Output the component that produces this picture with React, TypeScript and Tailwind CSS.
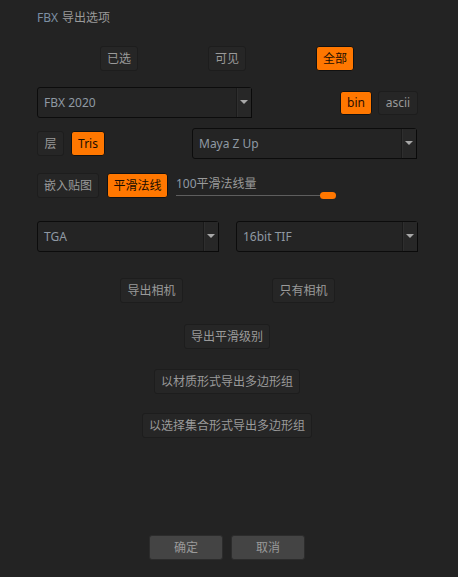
import React from 'react';

const font = { fontFamily: '"Noto Sans", "Noto Sans CJK SC", sans-serif' };

const Btn: React.FC<{ label: string; w: string; ml: string; active?: boolean }> = ({ label, w, ml, active }) => (
  <div
    className={
      'flex h-[25px] shrink-0 items-center justify-center rounded-[3px] border text-[12px] ' +
      w + ' ' + ml + ' ' +
      (active
        ? 'border-[#111111] bg-[#ff7700] text-[#1a0d00]'
        : 'border-[#1d1d1d] bg-[#262626] text-[#9a9a9a]')
    }
  >
    {label}
  </div>
);

const Select: React.FC<{ value: string; w: string; ml: string }> = ({ value, w, ml }) => (
  <div
    className={
      'flex h-[31px] shrink-0 items-stretch rounded-[3px] border border-[#0c0c0c] bg-[#242424] ' + w + ' ' + ml
    }
  >
    <div className="flex flex-1 items-center pl-[6px] text-[12px] text-[#8f99a3]">{value}</div>
    <div className="flex w-[15px] items-center justify-center border-l border-[#1a1a1a] bg-[#272727] shadow-[inset_1px_0_0_#2e2e2e,1px_1px_0_#0a0a0a]">
      <svg width="8" height="5" viewBox="0 0 8 5">
        <path d="M0 0 H8 L4 4 Z" fill="#a8a8a8" />
      </svg>
    </div>
  </div>
);

export default function App() {
  return (
    <div className="flex h-[577px] w-[458px] flex-col bg-[#232323]" style={font}>
      <div className="flex h-[36px] items-center pl-[37px] text-[12px] text-[#9a9a9a]">
        <span className="text-[#7d8fa3]">FBX</span>
        <span className="ml-[4px]">导出选项</span>
      </div>

      <div className="mt-[10px] flex items-center">
        <Btn label="已选" w="w-[38px]" ml="ml-[100px]" />
        <Btn label="可见" w="w-[38px]" ml="ml-[70px]" />
        <Btn label="全部" w="w-[38px]" ml="ml-[70px]" active />
      </div>

      <div className="mt-[16px] flex items-center">
        <Select value="FBX 2020" w="w-[215px]" ml="ml-[37px]" />
        <div className="ml-[88px] flex h-[24px] w-[32px] items-center justify-center rounded-[3px] border border-[#111111] bg-[#ff7700] text-[12px] text-[#2a0c00]">
          bin
        </div>
        <div className="ml-[6px] flex h-[24px] w-[40px] items-center justify-center rounded-[3px] border border-[#1d1d1d] bg-[#262626] text-[12px] text-[#9a9a9a]">
          ascii
        </div>
      </div>

      <div className="mt-[10px] flex items-center">
        <Btn label="层" w="w-[27px]" ml="ml-[37px]" />
        <Btn label="Tris" w="w-[34px]" ml="ml-[7px]" active />
        <Select value="Maya Z Up" w="w-[225px]" ml="ml-[87px]" />
      </div>

      <div className="mt-[14px] flex items-center">
        <Btn label="嵌入贴图" w="w-[62px]" ml="ml-[37px]" />
        <Btn label="平滑法线" w="w-[61px]" ml="ml-[8px]" active />
        <div className="relative ml-[8px] h-[25px] w-[160px]">
          <div className="pt-[3px] text-[12px] leading-[16px] text-[#9a9a9a]">
            <span className="text-[#8f99a3]">100</span>平滑法线量
          </div>
          <div className="absolute left-0 top-[22px] h-px w-[148px] bg-[#5e5e5e]" />
          <div className="absolute left-[144px] top-[19px] h-[7px] w-[16px] rounded-full bg-[#ff7700]" />
        </div>
      </div>

      <div className="mt-[23px] flex items-center">
        <Select value="TGA" w="w-[182px]" ml="ml-[37px]" />
        <Select value="16bit TIF" w="w-[182px]" ml="ml-[17px]" />
      </div>

      <div className="mt-[26px] flex items-center">
        <Btn label="导出相机" w="w-[63px]" ml="ml-[120px]" />
        <Btn label="只有相机" w="w-[63px]" ml="ml-[89px]" />
      </div>

      <div className="mt-[21px] flex">
        <Btn label="导出平滑级别" w="w-[86px]" ml="ml-[184px]" />
      </div>

      <div className="mt-[20px] flex">
        <Btn label="以材质形式导出多边形组" w="w-[146px]" ml="ml-[154px]" />
      </div>

      <div className="mt-[19px] flex">
        <Btn label="以选择集合形式导出多边形组" w="w-[170px]" ml="ml-[142px]" />
      </div>

      <div className="mt-[97px] flex">
        <div className="ml-[149px] flex h-[25px] w-[74px] items-center justify-center rounded-[3px] border border-[#2c2c2c] bg-[#444444] text-[12px] text-[#9a9a9a]">
          确定
        </div>
        <div className="ml-[8px] flex h-[25px] w-[74px] items-center justify-center rounded-[3px] border border-[#2c2c2c] bg-[#444444] text-[12px] text-[#9a9a9a]">
          取消
        </div>
      </div>
    </div>
  );
}
